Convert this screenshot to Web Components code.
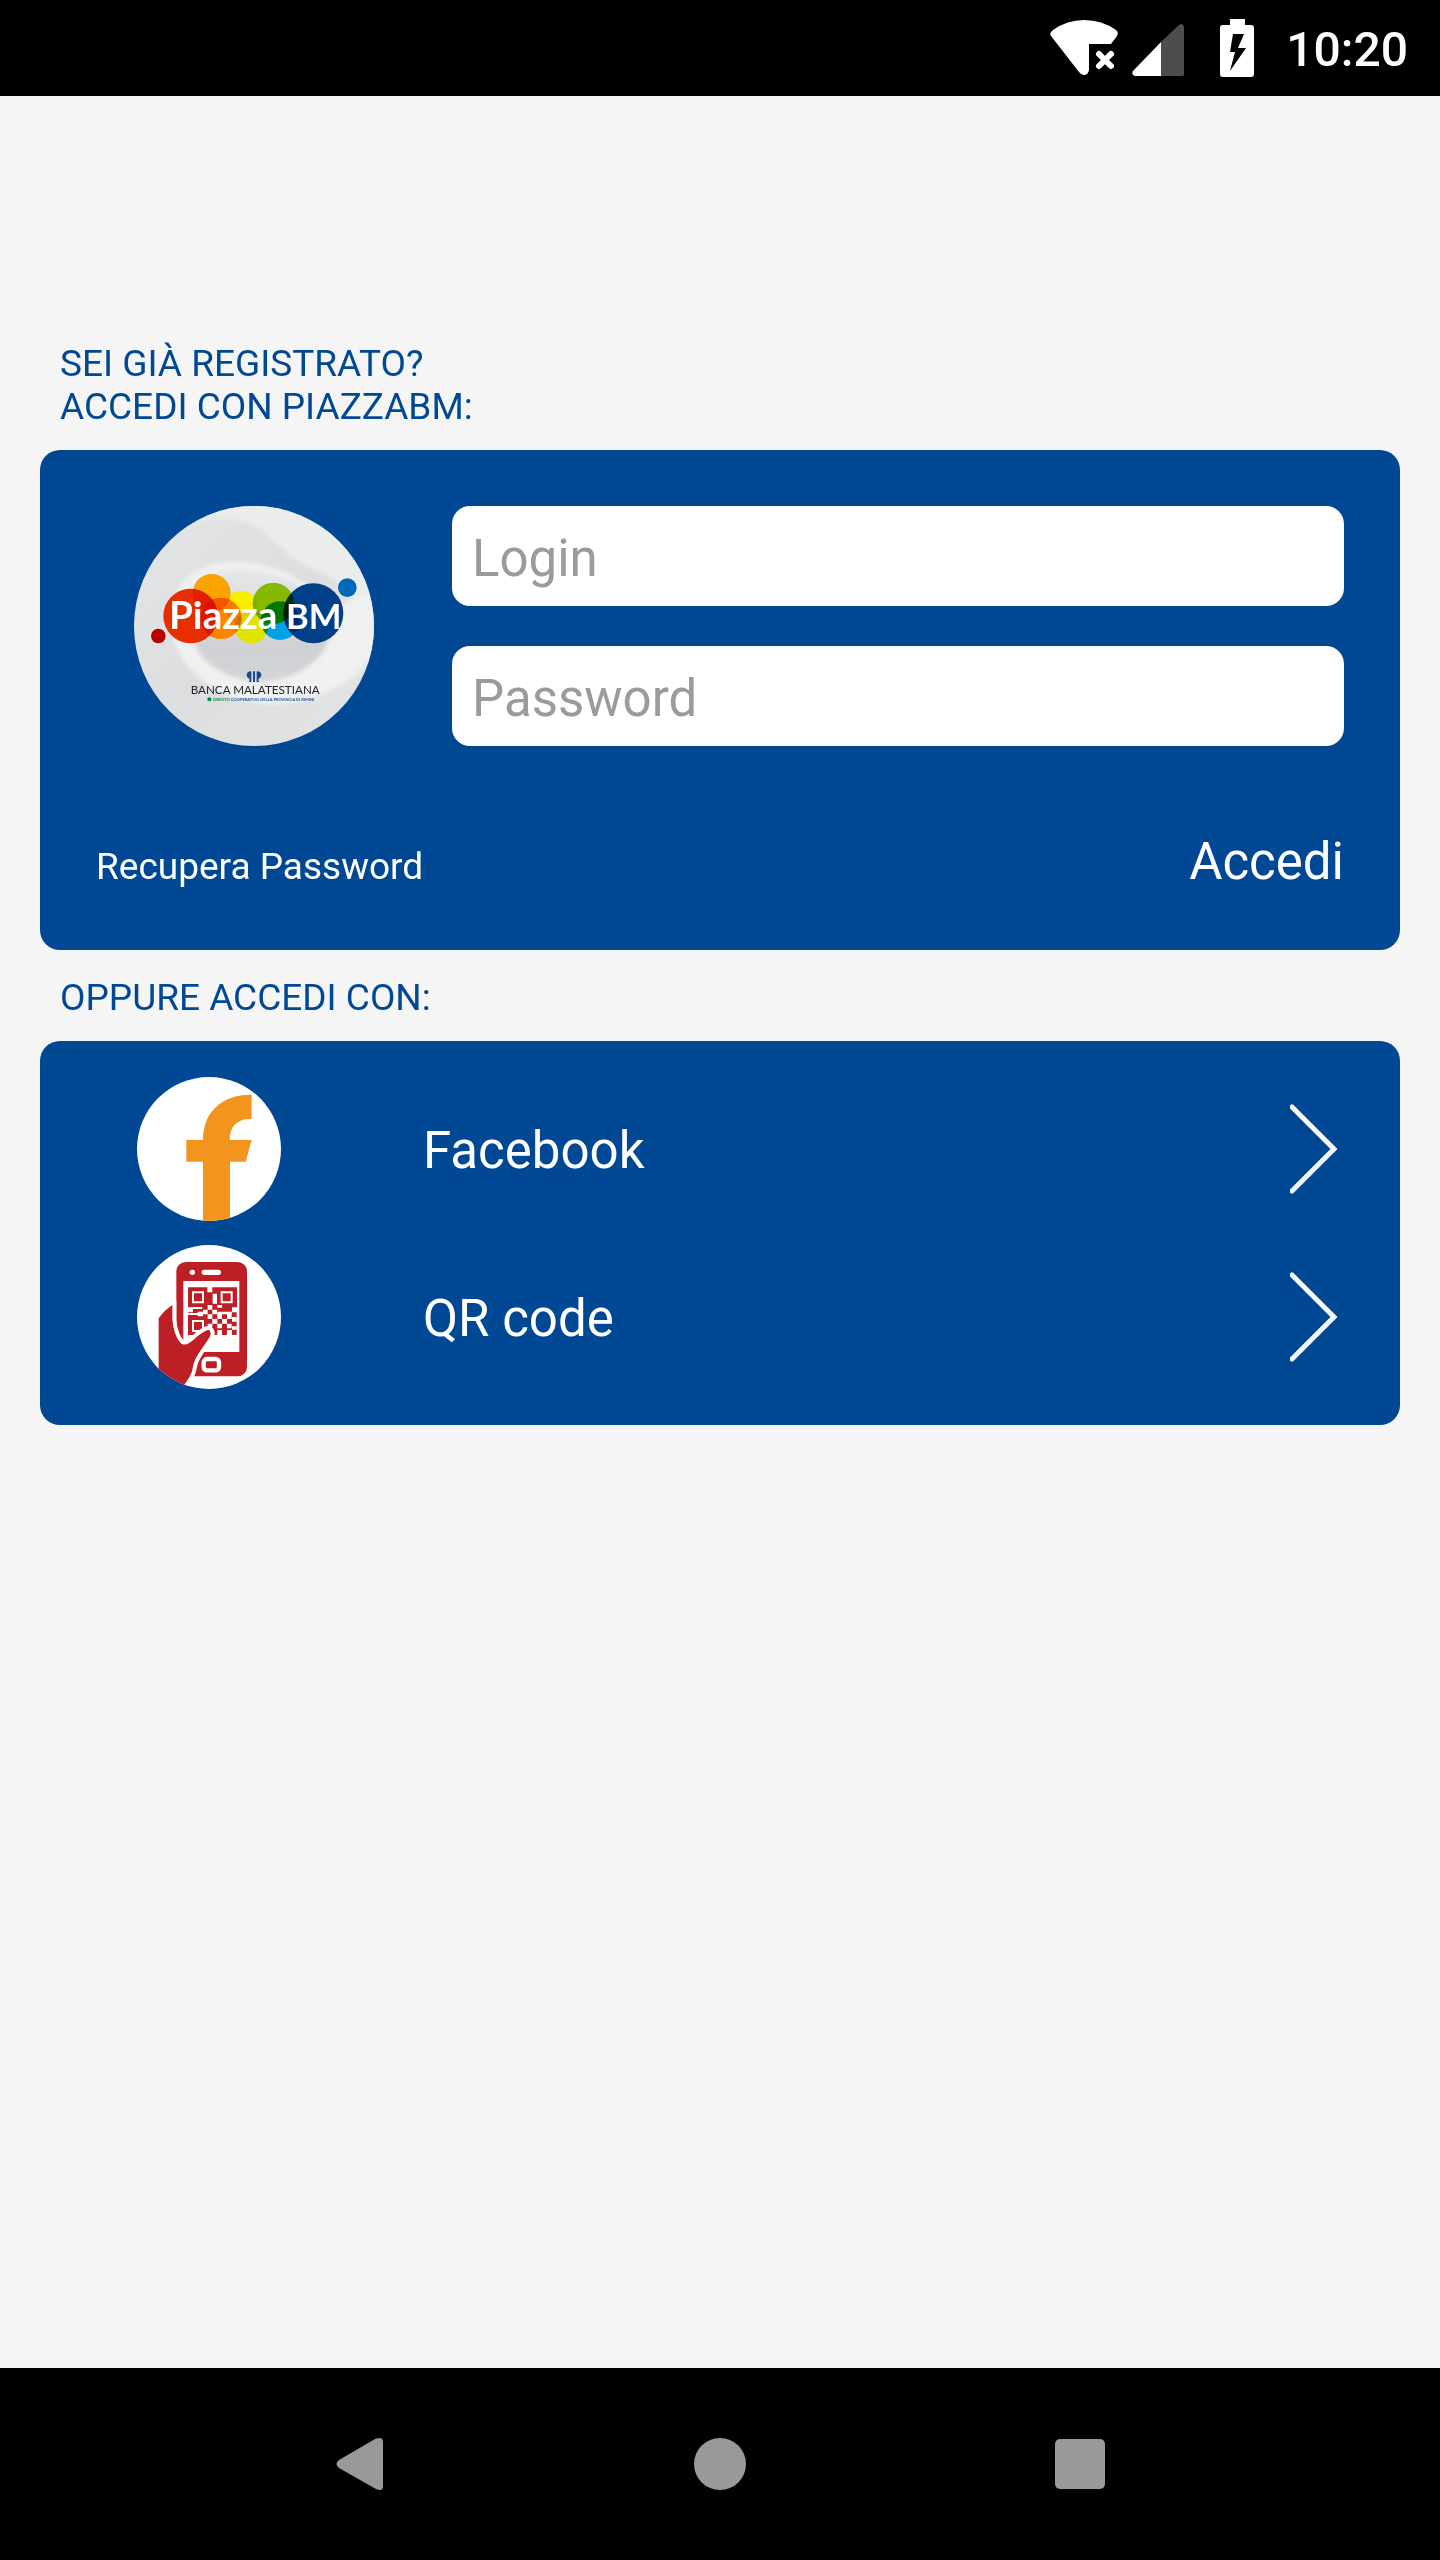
<!DOCTYPE html>
<html lang="it">
<head>
<meta charset="utf-8">
<meta name="viewport" content="width=device-width, initial-scale=1">
<title>PiazzaBM</title>
<style>
  body {
    margin: 0;
    background: #f5f5f5;
    font-family: Roboto, "Liberation Sans", sans-serif;
  }
</style>
</head>
<body>

<app-screen>
  <status-bar slot="top" time="10:20"></status-bar>

  <section-title>Sei già registrato?<br>Accedi con PiazzaBM:</section-title>
  <login-card>
    <piazza-logo slot="logo"></piazza-logo>
    <text-field name="login" type="text" label="Login"></text-field>
    <text-field name="password" type="password" label="Password"></text-field>
  </login-card>

  <section-title>Oppure accedi con:</section-title>
  <provider-list>
    <provider-row label="Facebook">
      <svg slot="icon" viewBox="0 0 432 432" width="144" height="144" aria-hidden="true">
        <path fill="#f3941f" d="M148 189H198C198 108 250 53 344 53V126C302 124 278 148 278 189H344L326 254H279V432H198V254H148Z"/>
      </svg>
    </provider-row>
    <provider-row label="QR code">
      <svg slot="icon" viewBox="0 0 432 432" width="144" height="144" aria-hidden="true">
        <rect x="118" y="51" width="212" height="343" rx="28" fill="#be1e25"/>
        <circle cx="166" cy="82" r="8" fill="#fff"/>
        <rect x="194" y="74" width="58" height="16" rx="8" fill="#fff"/>
        <rect x="139" y="108" width="168" height="213" fill="#fff"/>
        <g fill="#be1e25">
          <path d="M153 127H211V142H226V127H300V187H285V202H299V270H285V255H270V270H255V255H241V270H227V255H212V270H153V202H168V187H153Z"/>
        </g>
        <g fill="none" stroke="#fff" stroke-width="6">
          <path d="M168 142H198V172H168ZM254 142H284V172H254ZM168 228H198V258H168Z"/>
        </g>
        <g fill="#fff">
          <path d="M227 146h13v30h-13zM212 180h14v14h-14zM241 180h14v8h-14zM168 186h28v6h-28zM182 200h16v14h-16zM153 204h42v6h-42zM198 194h14v14h-14zM226 194h14v14h-14zM212 208h14v14h-14zM241 200h44v8h-44zM226 222h15v14h-15zM241 208h14v14h-14zM212 236h14v10h-14zM255 222h15v14h-15zM241 236h14v14h-14zM270 208h14v14h-14zM285 216h14v14h-14zM270 236h14v14h-14zM285 244h14v10h-14z"/>
        </g>
        <rect x="200" y="342" width="46" height="34" rx="10" fill="#be1e25" stroke="#fff" stroke-width="13"/>
        <path fill="#be1e25" stroke="#fff" stroke-width="12" stroke-linejoin="round" d="M59 218C72 199 92 180 112 170V222C113 250 124 280 137 291C148 298 160 284 178 269C194 257 205 247 217 249C229 254 230 269 221 283C207 307 177 336 173 369C172 389 157 412 132 440H59Z"/>
      </svg>
    </provider-row>
  </provider-list>

  <nav-bar slot="bottom"></nav-bar>
</app-screen>

<template id="app-screen">
  <style>
    :host {
      display: grid;
      grid-template-rows: auto 1fr auto;
      min-height: 100vh;
    }
    main {
      padding: 220px 40px 40px;
    }
  </style>
  <slot name="top"></slot>
  <main><slot></slot></main>
  <slot name="bottom"></slot>
</template>

<template id="status-bar">
  <style>
    :host {
      display: flex;
      justify-content: flex-end;
      align-items: center;
      height: 96px;
      padding-right: 32px;
      background: #000;
      color: #fff;
      font-size: 48px;
      font-weight: 500;
      line-height: 60px;
    }
    .signal { margin-left: 12px; }
    .battery { margin: 0 32px 0 36px; }
    #time { padding-top: 4px; }
  </style>
  <svg width="70" height="96" viewBox="0 0 70 96" fill="#fff" aria-label="Wi-Fi">
    <path d="M3 30Q17 20 34 20Q52 20 66 30Q69 32 67 36L61 44H39V70Q38 75 34 75Q31 75 29 72L1 36Q-1 33 3 30Z"/>
    <path d="M49 54L61 66M61 54L49 66" fill="none" stroke="#fff" stroke-width="6" stroke-linecap="round"/>
  </svg>
  <svg class="signal" width="52" height="96" viewBox="0 0 52 96" aria-label="Segnale">
    <path fill="#fff" d="M29 42V76H3Q-1 75 1 71Z"/>
    <path fill="#4d4d4d" d="M29 42L47 25Q51 22 52 27V74Q52 76 50 76H29Z"/>
  </svg>
  <svg class="battery" width="34" height="96" viewBox="0 0 34 96" aria-label="Batteria">
    <path fill="#fff" d="M10 19H25V25H31Q34 25 34 28V74Q34 77 31 77H3Q0 77 0 74V28Q0 25 3 25H10Z"/>
    <path d="M13 34H24L18 48H26L10 71L15 52H10Z"/>
  </svg>
  <span id="time"></span>
</template>

<template id="section-title">
  <style>
    :host {
      display: block;
      padding: 26px 20px 22px;
      color: #004893;
      font-size: 37px;
      line-height: 43px;
      text-transform: uppercase;
    }
    h2 {
      margin: 0;
      font: inherit;
    }
  </style>
  <h2><slot></slot></h2>
</template>

<template id="login-card">
  <style>
    :host {
      display: block;
      padding: 56px 56px 58px;
      border-radius: 20px;
      background: #004893;
      color: #fff;
    }
    form { margin: 0; }
    .top {
      display: grid;
      grid-template-columns: 316px 1fr;
      gap: 40px;
      margin-bottom: 86px;
    }
    .logo {
      display: flex;
      justify-content: center;
      align-items: center;
    }
    .fields {
      display: grid;
      gap: 40px;
    }
    .actions {
      display: flex;
      justify-content: space-between;
      align-items: baseline;
    }
    a {
      color: inherit;
      font-size: 37px;
      line-height: 43px;
      text-decoration: none;
    }
    button {
      margin: 0;
      padding: 0;
      border: 0;
      background: none;
      color: inherit;
      font: inherit;
      font-size: 51px;
      line-height: 60px;
      cursor: pointer;
    }
  </style>
  <form>
    <div class="top">
      <div class="logo"><slot name="logo"></slot></div>
      <div class="fields"><slot></slot></div>
    </div>
    <div class="actions">
      <a href="#recupera">Recupera Password</a>
      <button type="submit">Accedi</button>
    </div>
  </form>
</template>

<template id="text-field">
  <style>
    :host { display: block; }
    label { display: block; }
    input {
      display: block;
      box-sizing: border-box;
      width: 100%;
      height: 100px;
      margin: 0;
      padding: 22px 20px 18px;
      border: 0;
      border-radius: 18px;
      background: #fff;
      color: #333;
      font: inherit;
      font-size: 51px;
      line-height: 60px;
    }
    input::placeholder {
      color: #9b9b9b;
      opacity: 1;
    }
  </style>
  <label><input></label>
</template>

<template id="piazza-logo">
  <style>
    :host {
      display: block;
      width: 240px;
      height: 240px;
      border-radius: 50%;
      overflow: hidden;
    }
    svg { display: block; }
    .dots { isolation: isolate; }
    .dots circle { mix-blend-mode: multiply; }
    text { font-family: Lato, "Open Sans", sans-serif; }
  </style>
  <svg viewBox="0 0 720 720" width="240" height="240">
    <defs>
      <linearGradient id="base" x1="0" y1="0" x2="1" y2="1">
        <stop offset="0" stop-color="#e4e5e6"/>
        <stop offset=".5" stop-color="#dcdedf"/>
        <stop offset="1" stop-color="#e3e4e5"/>
      </linearGradient>
      <linearGradient id="bowl" x1="0" y1="0" x2="0" y2="1">
        <stop offset="0" stop-color="#e6e7e8"/>
        <stop offset=".7" stop-color="#cfd1d3"/>
        <stop offset="1" stop-color="#d3d5d7"/>
      </linearGradient>
      <filter id="soft"><feGaussianBlur stdDeviation="6"/></filter>
    </defs>
    <rect width="720" height="720" fill="url(#base)"/>
    <g filter="url(#soft)">
      <!-- marble swirl -->
      <path fill="#ebecec" d="M110 80C200 25 310 25 370 65C420 95 450 150 540 190C620 220 680 290 740 420V-20H110Z"/>
      <path fill="#eff0f1" d="M110 330C110 220 200 167 300 167C440 170 520 230 600 300L740 250V410C700 510 560 592 420 595C250 590 110 490 110 330Z"/>
      <path fill="url(#bowl)" d="M165 350C170 250 230 190 310 190C450 195 570 260 590 360C590 450 500 522 380 528C260 520 175 460 165 350Z"/>
    </g>
    <g class="dots">
      <circle cx="170" cy="330" r="82" fill="#e62e00"/>
      <circle cx="233" cy="261" r="57" fill="#fba300"/>
      <circle cx="261" cy="337" r="62" fill="#f98500"/>
      <circle cx="322" cy="304" r="50" fill="#f9ee00"/>
      <circle cx="352" cy="362" r="50" fill="#dfe300"/>
      <circle cx="418" cy="292" r="62" fill="#86b900"/>
      <circle cx="438" cy="344" r="58" fill="#00a2e4"/>
      <circle cx="538" cy="322" r="90" fill="#003f8a"/>
      <circle cx="640" cy="245" r="28" fill="#0068b8"/>
      <circle cx="73" cy="390" r="22" fill="#b80000"/>
    </g>
    <text x="105" y="368" font-size="116" font-weight="700" fill="#fff">Piazza</text>
    <text x="456" y="368" font-size="104" font-weight="700" fill="#fff">BM</text>
    <path fill="#164a92" d="M352 496V528H344Q352 520 340 514Q333 497 352 496ZM368 496V528H376Q368 520 380 514Q387 497 368 496ZM357 496h6v32h-6z"/>
    <text x="170" y="563" font-size="35" fill="#24252a">BANCA MALATESTIANA</text>
    <circle cx="226" cy="580" r="6" fill="#008a5a"/>
    <text x="236" y="585" font-size="12" font-weight="700" fill="#1d4f91" style="font-family: 'Liberation Sans Narrow', Lato, sans-serif"><tspan fill="#148a43">CREDITO</tspan> COOPERATIVO DELLA PROVINCIA DI RIMINI</text>
  </svg>
</template>

<template id="provider-list">
  <style>
    :host {
      display: grid;
      gap: 24px;
      padding: 36px 0;
      border-radius: 20px;
      background: #004893;
      color: #fff;
    }
  </style>
  <slot></slot>
</template>

<template id="provider-row">
  <style>
    :host { display: block; }
    button {
      display: grid;
      grid-template-columns: 144px 1fr 48px;
      column-gap: 142px;
      align-items: center;
      width: 100%;
      margin: 0;
      padding: 0 62px 0 97px;
      border: 0;
      background: none;
      color: inherit;
      font: inherit;
      font-size: 51px;
      line-height: 60px;
      text-align: left;
      cursor: pointer;
    }
    .icon {
      display: flex;
      width: 144px;
      height: 144px;
      border-radius: 50%;
      overflow: hidden;
      background: #fff;
    }
    .label { padding-top: 4px; }
  </style>
  <button type="button">
    <span class="icon"><slot name="icon"></slot></span>
    <span class="label" id="label"></span>
    <svg width="48" height="90" viewBox="0 0 48 90" aria-hidden="true">
      <path d="M2 3L44 45L2 87" fill="none" stroke="#f4f9ff" stroke-width="5" stroke-linecap="round"/>
    </svg>
  </button>
</template>

<template id="nav-bar">
  <style>
    :host {
      display: block;
      background: #000;
    }
    nav {
      display: grid;
      grid-template-columns: repeat(3, 1fr);
      height: 192px;
      padding: 0 12.5%;
    }
    button {
      display: flex;
      justify-content: center;
      align-items: center;
      margin: 0;
      padding: 0;
      border: 0;
      background: none;
      cursor: pointer;
    }
    svg { fill: #999; }
  </style>
  <nav>
    <button type="button" aria-label="Indietro">
      <svg width="54" height="54" viewBox="0 0 54 54"><path d="M6 23L42 2Q50 -1 50 5V49Q50 55 43 52L6 31Q1 27 6 23Z"/></svg>
    </button>
    <button type="button" aria-label="Home">
      <svg width="54" height="54" viewBox="0 0 54 54"><circle cx="27" cy="27" r="26"/></svg>
    </button>
    <button type="button" aria-label="Recenti">
      <svg width="54" height="54" viewBox="0 0 54 54"><rect x="2" y="2" width="50" height="50" rx="5"/></svg>
    </button>
  </nav>
</template>

<script>
  (function () {
    class BaseElement extends HTMLElement {
      constructor() {
        super();
        const template = document.querySelector('template#' + this.localName)
        this.attachShadow({ mode: 'open' })
        this.shadowRoot.appendChild(template.content.cloneNode(true))
      }
      $(selector) {
        return this.shadowRoot.querySelector(selector)
      }
    }

    class AppScreen extends BaseElement {}
    class SectionTitle extends BaseElement {}
    class PiazzaLogo extends BaseElement {}
    class ProviderList extends BaseElement {}
    class NavBar extends BaseElement {}

    class StatusBar extends BaseElement {
      connectedCallback() {
        this.$('#time').textContent = this.getAttribute('time')
      }
    }

    class LoginCard extends BaseElement {
      connectedCallback() {
        this.$('form').addEventListener('submit', e => {
          e.preventDefault()
          const detail = {}
          this.querySelectorAll('text-field').forEach(field => {
            detail[field.getAttribute('name')] = field.value
          })
          this.dispatchEvent(new CustomEvent('login', { detail, bubbles: true }))
        })
      }
    }

    class TextField extends BaseElement {
      connectedCallback() {
        const input = this.$('input')
        const label = this.getAttribute('label')
        input.type = this.getAttribute('type') || 'text'
        input.name = this.getAttribute('name')
        input.placeholder = label
        input.setAttribute('aria-label', label)
      }
      get value() {
        return this.$('input').value
      }
    }

    class ProviderRow extends BaseElement {
      connectedCallback() {
        this.$('#label').textContent = this.getAttribute('label')
      }
    }

    customElements.define('app-screen', AppScreen)
    customElements.define('status-bar', StatusBar)
    customElements.define('section-title', SectionTitle)
    customElements.define('login-card', LoginCard)
    customElements.define('text-field', TextField)
    customElements.define('piazza-logo', PiazzaLogo)
    customElements.define('provider-list', ProviderList)
    customElements.define('provider-row', ProviderRow)
    customElements.define('nav-bar', NavBar)
  })()
</script>
</body>
</html>
